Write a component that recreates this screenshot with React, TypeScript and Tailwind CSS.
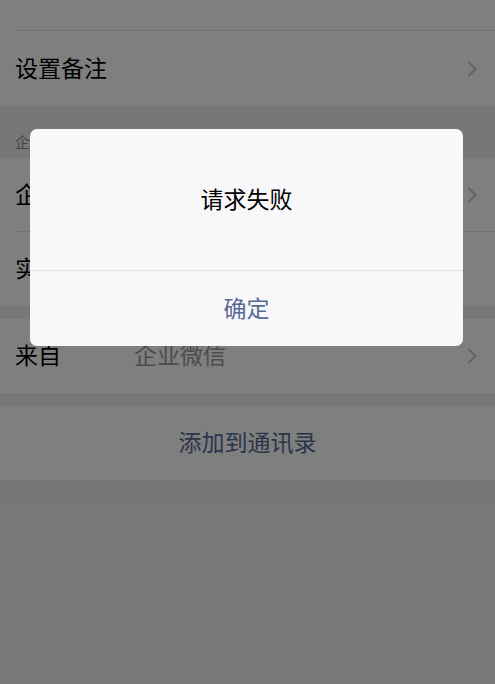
import React from "react";

const Chevron = () => (
  <svg width="10" height="16" viewBox="0 0 10 16" fill="none">
    <path d="M2 1.5 L8.5 8 L2 14.5" stroke="#c7c7cc" strokeWidth="2" strokeLinecap="round" strokeLinejoin="round" />
  </svg>
);

const Row = ({ label, value, chevron = true, border = false, h = "h-[74px]" }: { label: string; value?: string; chevron?: boolean; border?: boolean; h?: string }) => (
  <div className="bg-white pl-[15px]">
    <div className={`flex ${h} items-center pr-[18px] ${border ? "border-b border-[#e5e5e5]" : ""}`}>
      <span className="w-[119px] pb-[3px] text-[23px] text-black">{label}</span>
      <span className="flex-1 pb-[3px] text-[23px] text-[#999]">{value}</span>
      {chevron && <Chevron />}
    </div>
  </div>
);

export default function App() {
  return (
    <div className="relative h-[684px] w-[495px] overflow-hidden bg-[#efeff4]" style={{ fontFamily: '"Noto Sans CJK SC", "Noto Sans", sans-serif' }}>
      <div className="flex flex-col">
        <div className="bg-white pl-[15px]">
          <div className="h-[31px] border-b border-[#e5e5e5]" />
        </div>
        <Row label="设置备注" h="h-[75px]" />
        <div className="flex h-[52px] items-end pb-[5px] pl-[15px] text-[15px] text-[#888]">企业信息</div>
        <div className="bg-white">
          <Row label="企业" border />
          <Row label="实名" chevron={false} />
        </div>
        <div className="h-[13px]" />
        <Row label="来自" value="企业微信" />
        <div className="h-[13px]" />
        <div className="flex h-[74px] items-center justify-center bg-white pb-[3px] text-[23px] text-[#576b95]">添加到通讯录</div>
      </div>

      <div className="absolute inset-0 bg-black/50">
        <div className="absolute left-[30px] top-[129px] w-[433px] overflow-hidden rounded-[7px] bg-[#f8f7fa]">
          <div className="flex h-[141px] items-center justify-center pb-[3px] text-[23px] text-black">请求失败</div>
          <div className="h-px bg-[#e1e0e5]" />
          <div className="flex h-[75px] items-center justify-center pb-[3px] text-[23px] text-[#576b95]">确定</div>
        </div>
      </div>
    </div>
  );
}
